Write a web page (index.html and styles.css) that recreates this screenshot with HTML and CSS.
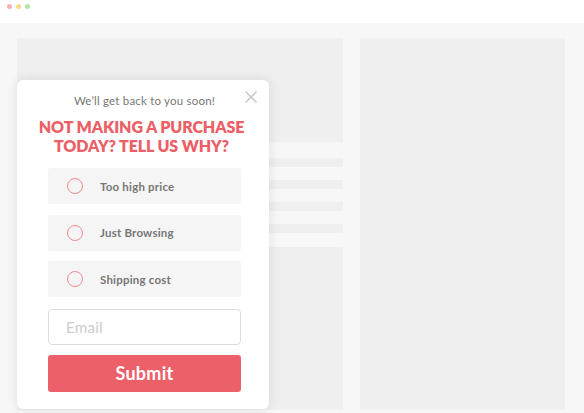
FILE: index.html
```html
<!DOCTYPE html>
<html lang="en">
<head>
    <meta charset="UTF-8">
    <meta name="viewport" content="width=device-width, initial-scale=1.0">
    <title>Exit Survey</title>
    <link rel="stylesheet" href="styles.css">
</head>
<body>

    <div class="topbar">
        <span class="dot red"></span>
        <span class="dot yellow"></span>
        <span class="dot green"></span>
    </div>

    <div class="page">
        <div class="col-left">
            <div class="block top"></div>
            <div class="lines">
                <div class="line"></div>
                <div class="line"></div>
                <div class="line"></div>
                <div class="line"></div>
            </div>
            <div class="block bottom"></div>
        </div>
        <div class="col-right"></div>

        <form class="popup" id="surveyForm">
            <button type="button" class="close" aria-label="Close">
                <svg width="12" height="12" viewBox="0 0 12 12">
                    <path d="M1 1L11 11M11 1L1 11" stroke="#c9c9c9" stroke-width="1.6" stroke-linecap="round"/>
                </svg>
            </button>
            <p class="sub">We’ll get back to you soon!</p>
            <h2 class="title">NOT MAKING A PURCHASE<br>TODAY? TELL US WHY?</h2>

            <label class="option">
                <input type="radio" name="reason" value="price">
                <span class="circle"></span>
                <span class="label-text">Too high price</span>
            </label>
            <label class="option">
                <input type="radio" name="reason" value="browsing">
                <span class="circle"></span>
                <span class="label-text">Just Browsing</span>
            </label>
            <label class="option">
                <input type="radio" name="reason" value="shipping">
                <span class="circle"></span>
                <span class="label-text">Shipping cost</span>
            </label>

            <input type="text" class="email" name="email" placeholder="Email">
            <button type="submit" class="submit">Submit</button>
        </form>
    </div>

</body>
</html>
```

FILE: styles.css
```css
* {
    box-sizing: border-box;
}
body {
    font-family: Lato, "Open Sans", sans-serif;
    margin: 0;
    background-color: #fff;
    height: 413px;
    overflow: hidden;
}
.topbar {
    height: 23px;
    display: flex;
    gap: 4px;
    padding: 4px 0 0 7px;
}
.dot {
    width: 5px;
    height: 5px;
    border-radius: 50%;
}
.dot.red { background-color: #f7b0b0; }
.dot.yellow { background-color: #f9dc85; }
.dot.green { background-color: #b3e6a4; }

.page {
    position: relative;
    height: 390px;
    background-color: #f7f7f7;
    padding: 15px 19px 3px 17px;
    display: grid;
    grid-template-columns: 326px 205px;
    gap: 17px;
}
.col-left {
    display: flex;
    flex-direction: column;
}
.block {
    background-color: #efefef;
}
.block.top {
    height: 104px;
}
.block.bottom {
    flex: 1;
}
.lines {
    display: flex;
    flex-direction: column;
    gap: 13px;
    padding: 16px 0 14px;
}
.line {
    height: 9px;
    background-color: #efefef;
}
.col-right {
    background-color: #efefef;
}

.popup {
    position: absolute;
    left: 17px;
    top: 57px;
    width: 252px;
    height: 329px;
    background-color: #fff;
    border-radius: 6px;
    box-shadow: 0 0 12px rgba(0, 0, 0, 0.1);
    padding: 14px 28px 0 31px;
    display: flex;
    flex-direction: column;
}
.close {
    position: absolute;
    top: 11px;
    right: 12px;
    border: none;
    background: none;
    padding: 0;
    cursor: pointer;
}
.sub {
    margin: 0;
    text-align: center;
    font-size: 11.5px;
    color: #777;
    letter-spacing: 0.2px;
}
.title {
    margin: 10px -14px 13px -20px;
    text-align: center;
    white-space: nowrap;
    font-size: 16px;
    line-height: 19px;
    font-weight: 800;
    color: #ec5f67;
    letter-spacing: -0.1px;
}
.option {
    display: flex;
    align-items: center;
    height: 36px;
    margin-bottom: 10.5px;
    background-color: #f5f5f5;
    border-radius: 3px;
    padding-left: 19px;
    cursor: pointer;
}
.option input {
    display: none;
}
.circle {
    width: 16px;
    height: 16px;
    border: 1px solid #f08a8f;
    border-radius: 50%;
}
.label-text {
    margin-left: 17px;
    font-size: 11.5px;
    font-weight: 700;
    color: #777;
    letter-spacing: 0.2px;
}
.email {
    height: 36px;
    margin-top: 1px;
    border: 1px solid #ddd;
    border-radius: 4px;
    padding: 0 17px;
    font-family: inherit;
    font-size: 15px;
    color: #555;
    letter-spacing: 0.3px;
}
.email::placeholder {
    color: #ccc;
}
.submit {
    height: 37px;
    margin-top: 10px;
    border: none;
    border-radius: 3px;
    background-color: #ec6169;
    color: white;
    font-family: inherit;
    font-size: 18px;
    font-weight: 700;
    letter-spacing: 0.3px;
    cursor: pointer;
}
```
